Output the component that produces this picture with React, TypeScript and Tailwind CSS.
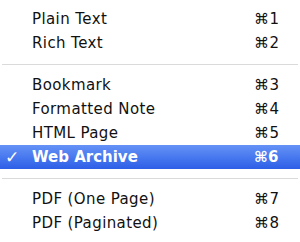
import React from 'react';

// menu rows, groups are split by separators
type Item = { label: string; key: string; checked?: boolean };

const groups: Item[][] = [
  [
    { label: 'Plain Text', key: '1' },
    { label: 'Rich Text', key: '2' },
  ],
  [
    { label: 'Bookmark', key: '3' },
    { label: 'Formatted Note', key: '4' },
    { label: 'HTML Page', key: '5' },
    { label: 'Web Archive', key: '6', checked: true },
  ],
  [
    { label: 'PDF (One Page)', key: '7' },
    { label: 'PDF (Paginated)', key: '8' },
  ],
];

function Row({ item }: { item: Item }) {
  const active = item.checked;
  return (
    <div
      className={
        'flex h-6 items-center leading-6 ' +
        (active
          ? 'bg-gradient-to-b from-[#6592f6] to-[#2d5ee7] text-white font-bold tracking-normal'
          : 'text-[#111]')
      }
    >
      <div className="w-8 shrink-0 pl-[5px] text-[17px]">{active ? '✓' : ''}</div>
      <div className="flex-1 whitespace-nowrap">{item.label}</div>
      <div className="w-[46px] shrink-0 whitespace-nowrap">⌘{item.key}</div>
    </div>
  );
}

export default function App() {
  return (
    <div
      className="w-[300px] h-[242px] bg-white pt-[7px] text-[15px] tracking-[0.4px] overflow-hidden"
      style={{ fontFamily: '"DejaVu Sans", "Lucida Grande", sans-serif' }}
    >
      {groups.map((g, i) => (
        <div key={i}>
          {i > 0 && (
            <div className="flex h-[18px] items-center px-[2px]">
              <div className="h-px w-full bg-[#dadada]" />
            </div>
          )}
          {g.map((item) => (
            <Row key={item.key} item={item} />
          ))}
        </div>
      ))}
    </div>
  );
}
